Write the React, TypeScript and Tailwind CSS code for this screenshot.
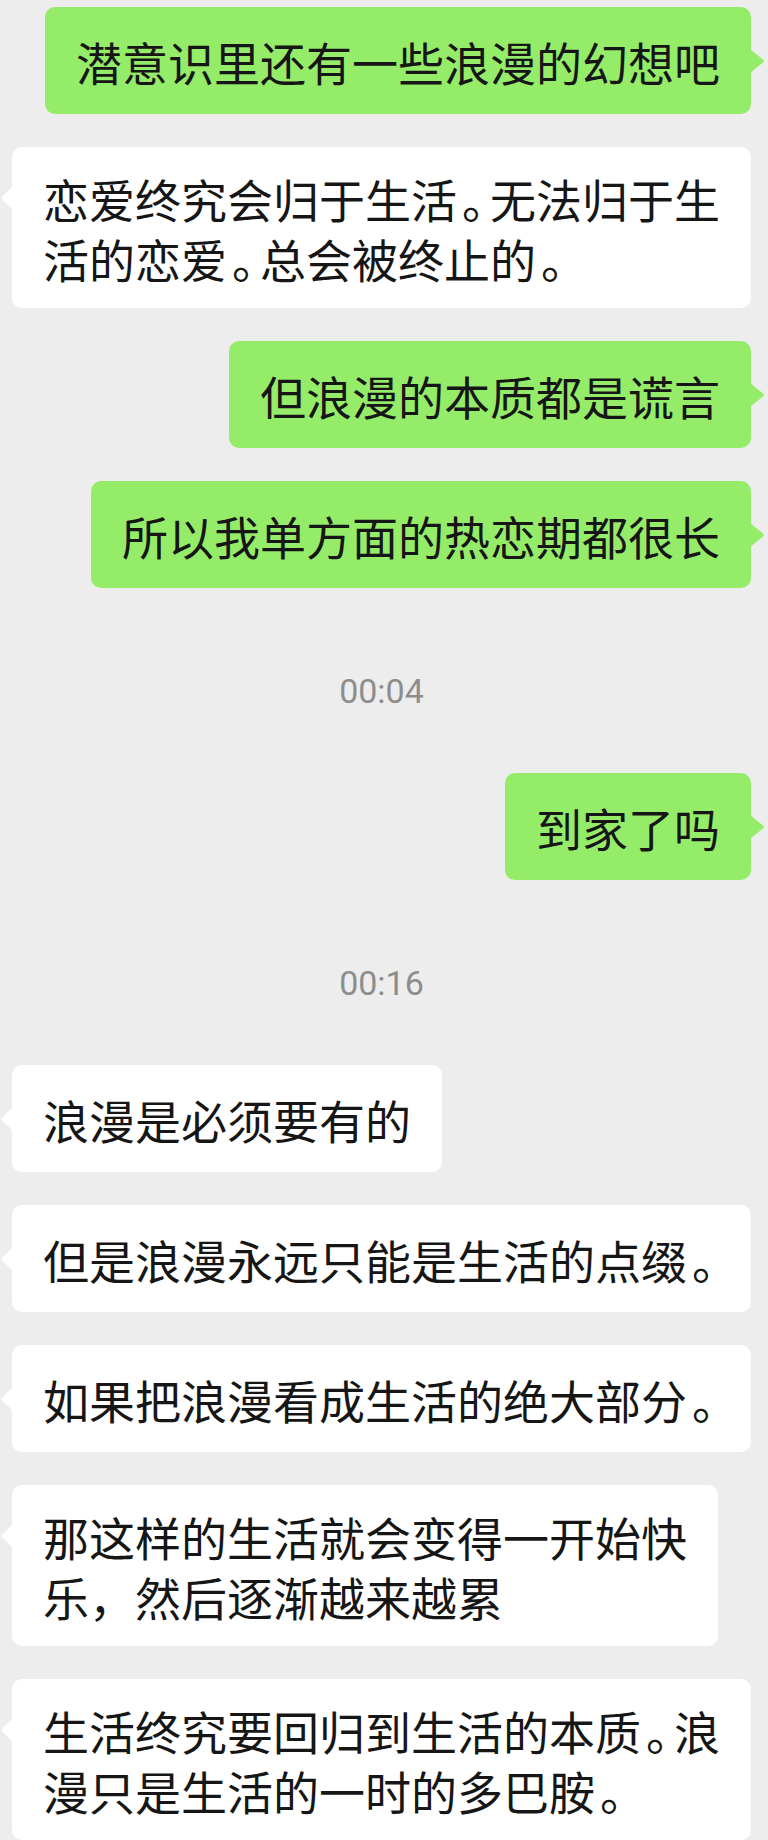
import React from 'react'

type Item =
  | { from: 'me' | 'them'; lines: string[] }
  | { time: string }

const chat: Item[] = [
  { from: 'me', lines: ['潜意识里还有一些浪漫的幻想吧'] },
  { from: 'them', lines: ['恋爱终究会归于生活。无法归于生', '活的恋爱。总会被终止的。'] },
  { from: 'me', lines: ['但浪漫的本质都是谎言'] },
  { from: 'me', lines: ['所以我单方面的热恋期都很长'] },
  { time: '00:04' },
  { from: 'me', lines: ['到家了吗'] },
  { time: '00:16' },
  { from: 'them', lines: ['浪漫是必须要有的'] },
  { from: 'them', lines: ['但是浪漫永远只能是生活的点缀。'] },
  { from: 'them', lines: ['如果把浪漫看成生活的绝大部分。'] },
  { from: 'them', lines: ['那这样的生活就会变得一开始快', '乐，然后逐渐越来越累'] },
  { from: 'them', lines: ['生活终究要回归到生活的本质。浪', '漫只是生活的一时的多巴胺。'] },
]

// the phone font sets 。 narrower than a full ideograph, ink nudged right
const Line = ({ text }: { text: string }) => {
  const parts = text.split('。')
  return (
    <>
      {parts.map((p, i) => (
        <React.Fragment key={i}>
          {p}
          {i < parts.length - 1 && (
            <span className="pl-[5px] tracking-[-18px]">。</span>
          )}
        </React.Fragment>
      ))}
    </>
  )
}

const Tail = ({ side, top }: { side: 'left' | 'right'; top: string }) => {
  if (side === 'right') {
    return (
      <svg
        className={`absolute -right-[14px] ${top}`}
        width="15"
        height="24"
        viewBox="0 0 15 24"
      >
        <path d="M0 0 L13 10.4 Q14.6 12 13 13.6 L0 24 Z" fill="#95ec69" />
      </svg>
    )
  }
  return (
    <svg
      className={`absolute -left-[11px] ${top}`}
      width="12"
      height="24"
      viewBox="0 0 12 24"
    >
      <path d="M12 0 L1.2 10.6 Q-0.2 12 1.2 13.4 L12 24 Z" fill="#ffffff" />
    </svg>
  )
}

const Bubble = ({ from, lines }: { from: 'me' | 'them'; lines: string[] }) => {
  const mine = from === 'me'
  const multi = lines.length > 1
  return (
    <div className={`flex ${mine ? 'justify-end' : 'justify-start'}`}>
      <div
        className={`relative max-w-[741px] whitespace-nowrap rounded-[10px] px-[31px] text-[46px] leading-[60px] text-[#161616] ${
          multi ? 'py-[20.5px]' : 'py-[23.5px]'
        } ${mine ? 'bg-[#95ec69]' : 'bg-white'}`}
      >
        <Tail side={mine ? 'right' : 'left'} top={multi ? 'top-[39px]' : 'top-[42px]'} />
        {lines.map((l, i) => (
          <React.Fragment key={i}>
            {i > 0 && <br />}
            <Line text={l} />
          </React.Fragment>
        ))}
      </div>
    </div>
  )
}

export default function App() {
  return (
    <div className="h-[1840px] w-full overflow-hidden bg-[#ededed] pl-[12px] pr-[17px] pt-[7px] [font-family:'Noto_Sans_CJK_SC','Noto_Sans',sans-serif]">
      <div className="flex flex-col gap-[33px]">
        {chat.map((item, i) =>
          'time' in item ? (
            <div
              key={i}
              className="pt-[50px] pb-[29px] text-center text-[34px] leading-[40px] text-[#8d8d8d] [font-family:Roboto,sans-serif]"
            >
              {item.time}
            </div>
          ) : (
            <Bubble key={i} from={item.from} lines={item.lines} />
          ),
        )}
      </div>
    </div>
  )
}
